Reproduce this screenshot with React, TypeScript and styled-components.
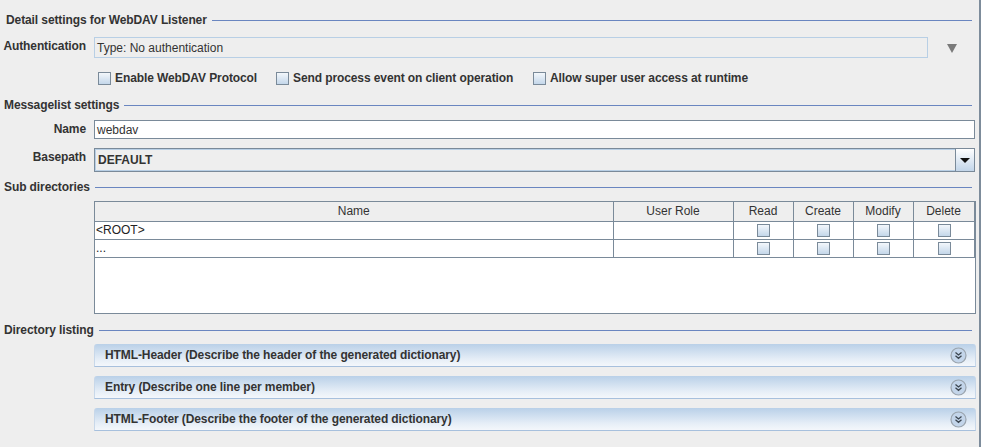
import styled, { createGlobalStyle } from "styled-components"

const Global = createGlobalStyle`
  html, body {
    margin: 0;
    padding: 0;
    background: #eeeeee;
  }
  * {
    box-sizing: border-box;
  }
`

// Painel geral, com a borda escura na direita
const Panel = styled.div`
  width: 981px;
  height: 447px;
  background: #eeeeee;
  border-right: 2px solid #7d8c9b;
  font-family: "Liberation Sans", Arial, sans-serif;
  font-size: 12px;
  color: #333333;
  display: flex;
  flex-direction: column;
  overflow: hidden;
`

const TitleRow = styled.div<{ $top: number; $left?: number }>`
  display: flex;
  align-items: center;
  height: 16px;
  margin-top: ${(p) => p.$top}px;
  padding-left: ${(p) => p.$left ?? 4}px;
  padding-right: 7px;
  gap: 5px;
  font-weight: bold;
  white-space: nowrap;
  letter-spacing: -0.1px;

  &::after {
    content: "";
    flex: 1;
    height: 1px;
    background: #6a86c0;
    margin-top: 1px;
  }
`

const FieldRow = styled.div<{ $top: number; $height: number }>`
  display: grid;
  grid-template-columns: 86px 1fr;
  column-gap: 8px;
  align-items: center;
  margin-top: ${(p) => p.$top}px;
  height: ${(p) => p.$height}px;
  padding-right: 4px;
`

const Label = styled.div`
  text-align: right;
  font-weight: bold;
  white-space: nowrap;
  align-self: start;
  padding-top: 2px;
  letter-spacing: -0.1px;
`

// Combo desabilitado da autenticacao
const DisabledCombo = styled.div`
  display: flex;
  align-items: center;
  height: 21px;
`

const DisabledBox = styled.div`
  width: 834px;
  height: 21px;
  border: 1px solid #b8cfe5;
  padding-left: 2px;
  display: flex;
  align-items: center;
  color: #333333;
`

const DisabledArrow = styled.div`
  width: 0;
  height: 0;
  margin-left: 19px;
  margin-top: 1px;
  border-left: 5px solid transparent;
  border-right: 5px solid transparent;
  border-top: 9px solid #7a7a7a;
`

const CheckRow = styled.div`
  display: flex;
  align-items: center;
  margin-top: 13px;
  height: 14px;
  padding-left: 98px;
`

const CheckItem = styled.label<{ $width: number }>`
  display: flex;
  align-items: center;
  gap: 4px;
  width: ${(p) => p.$width}px;
  font-weight: bold;
  white-space: nowrap;
  letter-spacing: -0.1px;
`

const Box = styled.span`
  display: inline-block;
  width: 13px;
  height: 13px;
  border: 1px solid #7a8a99;
  background: linear-gradient(#f3f7fb, #c4d7ea);
  flex: none;
`

const TextInput = styled.div`
  height: 19px;
  background: #ffffff;
  border: 1px solid #7a8a99;
  padding-left: 2px;
  display: flex;
  align-items: center;
`

const Combo = styled.div`
  height: 24px;
  display: flex;
  border: 1px solid #7a8a99;
  background: #eeeeee;
`

const ComboValue = styled.div`
  flex: 1;
  display: flex;
  align-items: center;
  padding-left: 2px;
  font-weight: bold;
  border: 1px solid #b8cfe5;
  border-right: none;
`

const ComboButton = styled.div`
  width: 19px;
  border-left: 1px solid #7a8a99;
  background: linear-gradient(#ffffff, #c2d5e9);
  display: flex;
  align-items: center;
  justify-content: center;

  &::before {
    content: "";
    border-left: 5px solid transparent;
    border-right: 5px solid transparent;
    border-top: 5px solid #111111;
  }
`

const TableWrap = styled.div`
  margin-top: 6px;
  margin-left: 94px;
  width: 882px;
  height: 113px;
  border: 1px solid #7a8a99;
  background: #ffffff;
`

const Table = styled.table`
  border-collapse: collapse;
  table-layout: fixed;
  width: 879px;
  font-size: 12px;
`

const Th = styled.th<{ $width: number }>`
  width: ${(p) => p.$width}px;
  height: 19px;
  padding: 0;
  background: #eeeeee;
  font-weight: normal;
  text-align: center;
  color: #333333;
  border-right: 1px solid #7a8a99;
  border-bottom: 1px solid #7a8a99;
`

const Td = styled.td<{ $center?: boolean }>`
  height: 18px;
  padding: 0 0 0 1px;
  border-right: 1px solid #7a8a99;
  border-bottom: 1px solid #7a8a99;
  text-align: ${(p) => (p.$center ? "center" : "left")};
  color: #222222;
  line-height: 0;
`

const CellText = styled.span`
  display: inline-block;
  line-height: 14px;
  font-size: 12px;
  vertical-align: middle;
`

const Accordions = styled.div`
  margin-top: 6px;
  margin-left: 94px;
  width: 882px;
  display: flex;
  flex-direction: column;
  gap: 9px;
`

const Bar = styled.div`
  height: 23px;
  border-bottom: 1px solid #a7c0dd;
  border-right: 1px solid #c8d8ea;
  border-left: 1px solid #c8d8ea;
  border-radius: 3px 3px 0 0;
  background: linear-gradient(#b9d0e8, #e6eef7 70%, #f4f7fb);
  display: flex;
  align-items: center;
  justify-content: space-between;
  padding: 0 8px 0 10px;
  font-weight: bold;
  color: #333333;
  letter-spacing: -0.1px;
`

function ExpandIcon() {
  return (
    <svg width="17" height="17" viewBox="0 0 17 17">
      <circle cx="8.5" cy="8.5" r="7.5" fill="#c3d5ea" stroke="#9aa4ae" strokeWidth="1.2" />
      <path d="M5.5 5.5 L8.5 8 L11.5 5.5 M5.5 8.8 L8.5 11.3 L11.5 8.8" fill="none" stroke="#3c4650" strokeWidth="1.3" />
    </svg>
  )
}

const columns = [
  { name: "Name", width: 518 },
  { name: "User Role", width: 120 },
  { name: "Read", width: 60 },
  { name: "Create", width: 60 },
  { name: "Modify", width: 60 },
  { name: "Delete", width: 61 },
]

const rows = ["<ROOT>", "..."]

const sections = [
  "HTML-Header (Describe the header of the generated dictionary)",
  "Entry (Describe one line per member)",
  "HTML-Footer (Describe the footer of the generated dictionary)",
]

export default function App() {
  return (
    <Panel>
      <Global />
      <TitleRow $top={12} $left={6}>Detail settings for WebDAV Listener</TitleRow>
      <FieldRow $top={9} $height={21}>
        <Label>Authentication</Label>
        <DisabledCombo>
          <DisabledBox>Type: No authentication</DisabledBox>
          <DisabledArrow />
        </DisabledCombo>
      </FieldRow>
      <CheckRow>
        <CheckItem $width={178}>
          <Box />
          Enable WebDAV Protocol
        </CheckItem>
        <CheckItem $width={257}>
          <Box />
          Send process event on client operation
        </CheckItem>
        <CheckItem $width={240}>
          <Box />
          Allow super user access at runtime
        </CheckItem>
      </CheckRow>

      <TitleRow $top={12}>Messagelist settings</TitleRow>
      <FieldRow $top={7} $height={19}>
        <Label>Name</Label>
        <TextInput>webdav</TextInput>
      </FieldRow>
      <FieldRow $top={9} $height={24}>
        <Label>Basepath</Label>
        <Combo>
          <ComboValue>DEFAULT</ComboValue>
          <ComboButton />
        </Combo>
      </FieldRow>

      <TitleRow $top={7}>Sub directories</TitleRow>
      <TableWrap>
        <Table>
          <thead>
            <tr>
              {columns.map((c) => (
                <Th key={c.name} $width={c.width}>
                  {c.name}
                </Th>
              ))}
            </tr>
          </thead>
          <tbody>
            {rows.map((r) => (
              <tr key={r}>
                <Td>
                  <CellText>{r}</CellText>
                </Td>
                <Td />
                {[0, 1, 2, 3].map((i) => (
                  <Td key={i} $center>
                    <Box />
                  </Td>
                ))}
              </tr>
            ))}
          </tbody>
        </Table>
      </TableWrap>

      <TitleRow $top={8}>Directory listing</TitleRow>
      <Accordions>
        {sections.map((s) => (
          <Bar key={s}>
            {s}
            <ExpandIcon />
          </Bar>
        ))}
      </Accordions>
    </Panel>
  )
}
